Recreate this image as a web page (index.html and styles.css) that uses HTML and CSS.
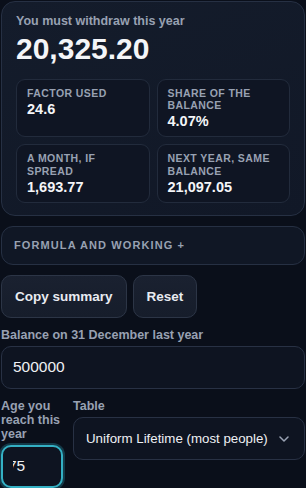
FILE: index.html
```html
<!DOCTYPE html>
<html lang="en">
<head>
    <meta charset="UTF-8">
    <meta name="viewport" content="width=device-width, initial-scale=1.0">
    <title>Required Minimum Distribution</title>
    <link rel="stylesheet" href="styles.css">
</head>
<body>
    <div class="page">
        <section class="result-card">
            <div class="result-label">You must withdraw this year</div>
            <div class="result-amount">20,325.20</div>
            <div class="stats">
                <div class="stat">
                    <div class="stat-label">Factor used</div>
                    <div class="stat-value">24.6</div>
                </div>
                <div class="stat">
                    <div class="stat-label">Share of the balance</div>
                    <div class="stat-value">4.07%</div>
                </div>
                <div class="stat">
                    <div class="stat-label">A month, if spread</div>
                    <div class="stat-value">1,693.77</div>
                </div>
                <div class="stat">
                    <div class="stat-label">Next year, same balance</div>
                    <div class="stat-value">21,097.05</div>
                </div>
            </div>
        </section>

        <details class="working">
            <summary>Formula and working +</summary>
        </details>

        <div class="actions">
            <button class="btn">Copy summary</button>
            <button class="btn">Reset</button>
        </div>

        <div class="field">
            <label for="balance">Balance on 31 December last year</label>
            <input id="balance" class="input" type="text" value="500000">
        </div>

        <div class="field-row">
            <div class="field">
                <label for="age">Age you reach this year</label>
                <input id="age" class="input input-age" type="text" value="75">
            </div>
            <div class="field">
                <label for="table">Table</label>
                <div class="select-wrap">
                    <select id="table" class="input select">
                        <option>Uniform Lifetime (most people)</option>
                        <option>Joint Life (spouse 10+ years younger)</option>
                        <option>Single Life (beneficiaries)</option>
                    </select>
                    <svg class="chevron" width="10" height="6" viewBox="0 0 10 6">
                        <polyline points="1,1 5,5 9,1" fill="none" stroke="#9aa3b4" stroke-width="1.5" stroke-linecap="round" stroke-linejoin="round"/>
                    </svg>
                </div>
            </div>
        </div>
    </div>
</body>
</html>
```

FILE: styles.css
```css
* {
    margin: 0;
    padding: 0;
    box-sizing: border-box;
}

body {
    font-family: "Liberation Sans", Arial, sans-serif;
    background: #0a0f1a;
    color: #e8ebf1;
    min-height: 100vh;
}

.page {
    padding: 1px;
    display: flex;
    flex-direction: column;
    gap: 10px;
}

.result-card {
    background: linear-gradient(160deg, #141c2b 0%, #111827 100%);
    border: 1px solid #263043;
    border-radius: 14px;
    padding: 12px 14px;
}

.result-label {
    font-size: 12.5px;
    font-weight: 700;
    color: #98a1b2;
    line-height: 15px;
}

.result-amount {
    font-size: 30px;
    font-weight: 700;
    color: #f4f5f8;
    line-height: 33px;
    margin-top: 3px;
}

.stats {
    display: grid;
    grid-template-columns: 1fr 1fr;
    gap: 7px;
    margin-top: 14px;
}

.stat {
    background: #0f1523;
    border: 1px solid #222b3c;
    border-radius: 9px;
    padding: 7px 10px 6px;
}

.stat-label {
    font-size: 10.5px;
    font-weight: 700;
    text-transform: uppercase;
    letter-spacing: 0.04em;
    line-height: 12.2px;
    color: #98a1b2;
}

.stat-value {
    font-size: 14.5px;
    font-weight: 700;
    color: #f4f5f8;
    line-height: 17px;
    margin-top: 2px;
}

.working {
    background: #101725;
    border: 1px solid #263043;
    border-radius: 12px;
    height: 39px;
    padding: 12px 12px;
}

.working summary {
    display: block;
    font-size: 11px;
    font-weight: 700;
    text-transform: uppercase;
    letter-spacing: 0.1em;
    color: #98a1b2;
    line-height: 13px;
    cursor: pointer;
}

.working summary::-webkit-details-marker {
    display: none;
}

.actions {
    display: flex;
    gap: 6px;
}

.btn {
    font-family: inherit;
    font-size: 13.5px;
    font-weight: 700;
    color: #e8ebf1;
    background: linear-gradient(180deg, #1a2130 0%, #161d2b 100%);
    border: 1px solid #2c3546;
    border-radius: 10px;
    height: 43px;
    padding: 0 13px;
    line-height: 15px;
    cursor: pointer;
}

.field {
    display: flex;
    flex-direction: column;
    gap: 4px;
    min-width: 0;
}

.field label {
    font-size: 12.5px;
    font-weight: 700;
    color: #98a1b2;
    line-height: 14px;
}

.input {
    font-family: inherit;
    font-size: 15.5px;
    color: #eef0f4;
    background: #0e1421;
    border: 1px solid #283144;
    border-radius: 10px;
    height: 43px;
    padding: 0 11px;
    width: 100%;
    outline: none;
}

.field-row {
    display: grid;
    grid-template-columns: 62px 1fr;
    gap: 10px;
    align-items: start;
}

.input-age {
    border: 2px solid #34b0c4;
    box-shadow: 0 0 0 2px rgba(40, 140, 160, 0.35);
    padding: 0 10px;
    text-indent: -5px;
}

.select-wrap {
    position: relative;
}

.select {
    appearance: none;
    -webkit-appearance: none;
    font-size: 13.3px;
    padding: 0 30px 0 12px;
    cursor: pointer;
}

.chevron {
    position: absolute;
    right: 16px;
    top: 19px;
    pointer-events: none;
}
```
